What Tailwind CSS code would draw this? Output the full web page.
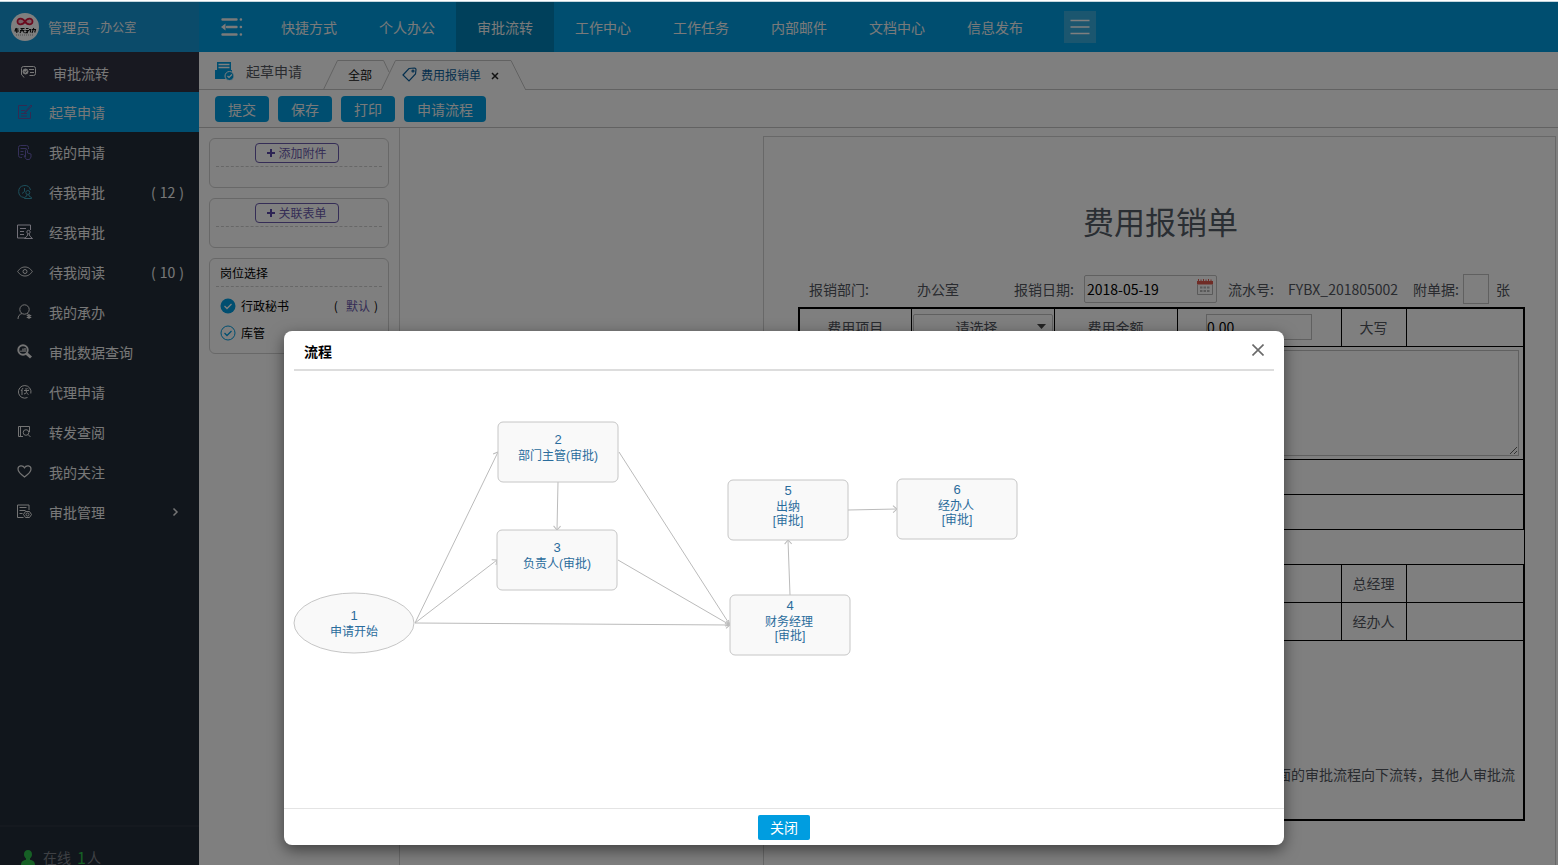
<!DOCTYPE html>
<html lang="zh-CN">
<head>
<meta charset="utf-8">
<meta name="viewport" content="width=device-width, initial-scale=1">
<title>费用报销单 - 起草申请</title>
<script src="https://cdn.jsdelivr.net/npm/@tailwindcss/browser@4"></script>
</head>
<body class="flex h-screen flex-col overflow-hidden bg-white font-['Noto_Sans_CJK_SC','Noto_Sans',sans-serif] text-sm text-[#52565e]">
<div class="h-0.5 shrink-0 border-b border-[#c4d6de] bg-white"></div>
<div class="relative flex min-h-0 flex-1 flex-col overflow-hidden">

  <!-- top bar -->
  <header class="flex h-[50px] shrink-0 items-stretch bg-[#009de0] text-[#f4f4f4]">
    <div class="flex w-[199px] shrink-0 items-center bg-[#1696d4] pl-[11px]">
      <svg class="size-7 shrink-0" viewBox="0 0 28 28">
        <circle cx="14" cy="14" r="14" fill="#fff"/>
        <path d="M14 8.500c-2-3.500-7.500-4-7.500 0s5.500 3.500 7.500 0c2-3.500 7.500-4 7.500 0s-5.500 3.500-7.500 0z" fill="#f3c4cf" stroke="#d4143c" stroke-width="1.800"/>
        <g fill="none" stroke="#111" stroke-width="1.100">
          <path d="M4 16h3.500M5.500 15l-1.500 2.500M3.500 18h4.500M5.800 16v4"/>
          <path d="M9.500 15.500h4M9 17.500h4.500M11.500 15.500l-2.500 4.500M11.500 17.500l2 2.500"/>
          <path d="M15 15.500h2.500M14.500 17.500h3l-2.500 2.300h2M18 16.500h1.800l-.5 3"/>
          <path d="M21 16.500h3.500l-.8 3M22.800 15l-1.800 5"/>
        </g>
        <path d="M5 22h18" stroke="#999" stroke-dasharray="1 1"/>
      </svg>
      <span class="ml-[9px]">管理员</span><span class="ml-1.5 text-xs">-办公室</span>
    </div>
    <button type="button" aria-label="收起菜单" class="flex w-[61px] shrink-0 items-center pl-[22px]">
      <svg class="h-[18px] w-[22px]" viewBox="0 0 22 18" fill="none" stroke="#f4f4f4" stroke-width="2.400" stroke-linecap="round">
        <path d="M1.500 1.500h14M6 9h9.500M1.500 16.500h14M19.800 1.500h.2M19.800 9h.2M19.800 16.500h.2"/>
        <path d="M0 9l4.500-3.500v7z" fill="#f4f4f4" stroke="none"/>
      </svg>
    </button>
    <nav class="flex">
      <a href="#" class="flex w-[98px] items-center justify-center">快捷方式</a>
      <a href="#" class="flex w-[98px] items-center justify-center">个人办公</a>
      <a href="#" class="flex w-[98px] items-center justify-center bg-[#0080b6]">审批流转</a>
      <a href="#" class="flex w-[98px] items-center justify-center">工作中心</a>
      <a href="#" class="flex w-[98px] items-center justify-center">工作任务</a>
      <a href="#" class="flex w-[98px] items-center justify-center">内部邮件</a>
      <a href="#" class="flex w-[98px] items-center justify-center">文档中心</a>
      <a href="#" class="flex w-[98px] items-center justify-center">信息发布</a>
    </nav>
    <button type="button" aria-label="更多" class="ml-5 flex size-8 items-center justify-center self-center bg-[#36adde]">
      <svg class="h-4 w-5" viewBox="0 0 20 16" stroke="#fff" stroke-width="1.500"><path d="M.5 1.500h19M.5 8h19M.5 14.500h19"/></svg>
    </button>
  </header>

  <div class="flex min-h-0 flex-1">
    <!-- side menu -->
    <aside class="flex w-[199px] shrink-0 flex-col bg-[#222c38] text-[#f0f0f0]">
      <div class="flex h-10 shrink-0 items-center bg-[#303242] pt-0.5 pl-5">
        <svg class="mb-0.5 h-4 w-[17px]" viewBox="0 0 17 16" fill="none" stroke="#f0f0f0">
          <path d="M4 13.500l-1.500-2a1.500 1.500 0 0 1-1-1.500V4.500A2 2 0 0 1 3.500 2.500h10a2 2 0 0 1 2 2v5a2 2 0 0 1-2 2h-4"/>
          <circle cx="5.500" cy="7.500" r="2.500" fill="#f0f0f0"/><path d="M4.300 7.500l1 1 1.700-2" stroke="#303242"/><path d="M9 5.500h5M10 8.500h4"/>
        </svg>
        <span class="ml-4">审批流转</span>
      </div>
      <nav class="flex flex-col">
        <a href="#" class="flex h-10 items-center bg-[#009de0] pl-[17px]">
          <svg class="mr-4 size-4" viewBox="0 0 16 16" fill="none" stroke="#6656a4"><path d="M10 1.500H1.500v13h12V8M4 6.500h4M4 9.500h6M4 12h6M8 8l6-7 1 1-6 6-1.500.5z"/></svg>
          <span>起草申请</span></a>
        <a href="#" class="flex h-10 items-center pl-[17px]">
          <svg class="mr-4 size-4" viewBox="0 0 16 16" fill="none" stroke="#6a60b4"><path d="M5 13.500H3.500a2 2 0 0 1-2-2v-8a2 2 0 0 1 2-2h6a2 2 0 0 1 2 2V5M3.500 4.500h6M3.500 7.500h3M3.500 10.500h3"/><path d="M8.500 13V6.500a1 1 0 0 1 2 0V9l3.500 1v3l-1.500 2.500H9.500L7 12l1.500-.5"/></svg>
          <span>我的申请</span></a>
        <a href="#" class="flex h-10 items-center pr-[15px] pl-[17px]">
          <svg class="mr-4 size-4" viewBox="0 0 16 16" fill="none" stroke="#3aa0b8"><path d="M7 13.500A6 6 0 1 1 13.500 6M7.500 4v3.500l-2.500 2"/><circle cx="10.800" cy="8.500" r="2"/><path d="M7.500 14.500v-1l2.300-1.500v-1.500M14.500 14.500v-1L12 12v-1.500M7.500 14.500h7"/></svg>
          <span class="flex-1">待我审批</span><span class="flex gap-1"><span>(</span><span>12</span><span>)</span></span></a>
        <a href="#" class="flex h-10 items-center pl-[17px]">
          <svg class="mr-4 size-4" viewBox="0 0 16 16" fill="none" stroke="#e4e0f0"><path d="M8 14H.5V1h13v5M3 4.500h6M3 7.500h4M3 10.500h4"/><circle cx="11.500" cy="8" r="1.700"/><path d="M10.800 9.800l-.6 2.200-2.700 2.500h8l-2.700-2.500-.6-2.200"/></svg>
          <span>经我审批</span></a>
        <a href="#" class="flex h-10 items-center pr-[15px] pl-[17px]">
          <svg class="mr-4 size-4" viewBox="0 0 16 16" fill="none" stroke="#e8e8e8"><path d="M.7 7.500C3 4 5.500 3 8 3s5 1 7.300 4.500C13 11 10.500 12 8 12S3 11 .7 7.500z"/><circle cx="8" cy="7.500" r="2"/></svg>
          <span class="flex-1">待我阅读</span><span class="flex gap-1"><span>(</span><span>10</span><span>)</span></span></a>
        <a href="#" class="flex h-10 items-center pl-[17px]">
          <svg class="mr-4 size-4" viewBox="0 0 16 16" fill="none" stroke="#e8e8e8"><circle cx="7.500" cy="5.500" r="4.700"/><path d="M5 9.500c-2.500.8-4 2.500-4 5.500M10 9.500l1.500.8"/><path d="M12 10v5M9.800 11.200l4.400 2.600M14.200 11.200l-4.400 2.600" stroke-width="1.200"/></svg>
          <span>我的承办</span></a>
        <a href="#" class="flex h-10 items-center pl-[17px]">
          <svg class="mr-4 size-4" viewBox="0 0 16 16" fill="none" stroke="#e8e8e8"><circle cx="6" cy="6" r="4.700" stroke-width="2"/><path d="M9.500 9.500l4.500 4" stroke-width="3"/><path d="M4 8V6.500M6 8V4.500M8 8V4" stroke-width="1.300"/></svg>
          <span>审批数据查询</span></a>
        <a href="#" class="flex h-10 items-center pl-[17px]">
          <svg class="mr-4 size-4" viewBox="0 0 16 16" fill="none" stroke="#e8e8e8"><path d="M10.500 13.500A6.300 6.300 0 1 1 13.800 9.500"/><path d="M6 4L4 7M5 6v5M7 6.500h5M9 4c0 3 .5 6 2.500 6.500M10.500 4.300l1 1M7 10l2-1"/></svg>
          <span>代理申请</span></a>
        <a href="#" class="flex h-10 items-center pl-[17px]">
          <svg class="mr-4 size-4" viewBox="0 0 16 16" fill="none" stroke="#e8e8e8"><path d="M6 12.500H1.500V2.500h11V8M3.500 2.500v10"/><circle cx="9" cy="8.500" r="2.800"/><path d="M11 10.500l2.500 2.500"/></svg>
          <span>转发查阅</span></a>
        <a href="#" class="flex h-10 items-center pl-[17px]">
          <svg class="mr-4 size-4" viewBox="0 0 16 16" fill="none" stroke="#e8e8e8" stroke-width="1.200"><path d="M7.500 13C4 10.500 1 8 1 5c0-3.700 4.800-4.300 6.500-1.200C9.200.7 14 1.300 14 5c0 3-3 5.500-6.500 8z"/></svg>
          <span>我的关注</span></a>
        <a href="#" class="flex h-10 items-center pr-5 pl-[17px]">
          <svg class="mr-4 size-4" viewBox="0 0 16 16" fill="none" stroke="#e8e8e8"><path d="M6.500 13.500h-6V1h11.500v5M2.500 3.500h7M2.500 6.500h6M2.500 9.500h3"/><path d="M8.500 7.500h4l2 3-2 3h-4l-2-3z"/><circle cx="10.500" cy="10.500" r="1.500"/></svg>
          <span class="flex-1">审批管理</span>
          <svg class="h-2 w-2" viewBox="0 0 8 8" fill="none" stroke="#e8e8e8" stroke-width="1.500"><path d="M2.500.5L6 4 2.500 7.500"/></svg></a>
      </nav>
      <div class="mt-auto flex h-10 shrink-0 items-end border-t-2 border-[#2b323f] pl-[21px] leading-4 text-[#7c8088]">
        <svg class="mr-2 h-[15px] w-[14px]" viewBox="0 0 14 15" fill="#2cc04a"><path d="M7 0c2.500 0 4 1.700 4 4.200C11 6.300 10 7.500 9 8.500v1.200c2.500.8 5 1.300 5 5.300H0c0-4 2.500-4.500 5-5.300V8.500c-1-1-2-2.200-2-4.300C3 1.700 4.500 0 7 0z"/></svg>
        <span>在线</span><span class="mr-px ml-1.5 text-base leading-4 text-[#2cc04a]">1</span><span>人</span>
      </div>
    </aside>

    <main class="flex min-w-0 flex-1 flex-col bg-white">
      <!-- tabs -->
      <div class="relative flex h-[38px] shrink-0 border-b border-[#c4c4c4]">
        <svg class="absolute top-2 left-[124px] h-[30px] w-[204px]" viewBox="0 0 204 30" fill="none" stroke="#c4c4c4">
          <path d="M59 29.500h143" stroke="#fff" stroke-width="2"/>
          <path d="M.5 29.500L14.500.5h46L66 12M58.500 29.500L72.500.5H188l14.500 29"/>
        </svg>
        <div class="flex w-[149px] items-center pl-4">
          <svg class="h-5 w-[19px]" viewBox="0 0 19 20"><path d="M2 1h14v9H2z" fill="#009de0"/><path d="M3.500 3.500h11M3.500 6.500h11" stroke="#fff" stroke-width="1.300"/><path d="M0 9h17v9H0z" fill="#009de0"/><circle cx="14.500" cy="15" r="4.500" fill="#009de0" stroke="#fff"/><path d="M12.500 15l1.500 1.500 3-3" fill="none" stroke="#fff" stroke-width="1.200"/></svg>
          <h1 class="ml-3">起草申请</h1>
        </div>
        <a href="#" class="relative w-[54px] pt-[13px] text-xs leading-5 text-[#111]">全部</a>
        <a href="#" class="relative flex gap-1 pt-[13px] text-xs leading-5 text-[#0c5f9c]">
          <svg class="mt-0.5 size-[15px]" viewBox="0 0 15 15" fill="none" stroke="#0c5f9c" stroke-width="1.200"><path d="M1 8L7 1.500l5.500-.5c1 0 1.500.5 1.500 1.500L13.500 7 7 14z"/><circle cx="11" cy="4" r="1"/></svg>
          <span>费用报销单</span></a>
        <button type="button" aria-label="关闭标签" class="relative ml-2.5 pt-2.5">
          <svg class="size-2" viewBox="0 0 8 8" stroke="#222" stroke-width="1.500"><path d="M1 1l6 6M7 1L1 7"/></svg>
        </button>
      </div>
      <!-- actions -->
      <div class="flex h-[38px] shrink-0 items-center gap-[9px] border-b border-[#c4c4c4] pl-4">
        <button type="button" class="h-[26px] w-[54px] rounded bg-[#009de0] text-[#f4f4f4]">提交</button>
        <button type="button" class="h-[26px] w-[54px] rounded bg-[#009de0] text-[#f4f4f4]">保存</button>
        <button type="button" class="h-[26px] w-[54px] rounded bg-[#009de0] text-[#f4f4f4]">打印</button>
        <button type="button" class="h-[26px] w-[82px] rounded bg-[#009de0] text-[#f4f4f4]">申请流程</button>
      </div>

      <div class="flex min-h-0 flex-1">
        <div class="flex w-[201px] shrink-0 flex-col gap-2.5 border-r border-[#d4d4d4] p-2.5 text-xs">
          <section class="h-[50px] rounded-md border border-[#d0d0d0] px-1.5 pt-1">
            <div class="flex h-6 items-start justify-center border-b border-dashed border-[#cfcfcf]">
              <button type="button" class="mr-1 flex h-5 w-[84px] items-center justify-center gap-[3px] rounded border border-[#6a5aac] leading-4 text-[#6a5aac]">
                <svg class="size-2" viewBox="0 0 8 8" stroke="#5a48a8" stroke-width="2"><path d="M4 0v8M0 4h8"/></svg>添加附件</button>
            </div>
          </section>
          <section class="h-[50px] rounded-md border border-[#d0d0d0] px-1.5 pt-1">
            <div class="flex h-6 items-start justify-center border-b border-dashed border-[#cfcfcf]">
              <button type="button" class="mr-1 flex h-5 w-[84px] items-center justify-center gap-[3px] rounded border border-[#6a5aac] leading-4 text-[#6a5aac]">
                <svg class="size-2" viewBox="0 0 8 8" stroke="#5a48a8" stroke-width="2"><path d="M4 0v8M0 4h8"/></svg>关联表单</button>
            </div>
          </section>
          <section class="h-24 rounded-md border border-[#d0d0d0] px-1.5 text-black">
            <h2 class="h-7 border-b border-dashed border-[#cfcfcf] pl-1 leading-7">岗位选择</h2>
            <label class="flex h-8 items-center pt-1.5 pl-1">
              <input type="radio" name="post" checked class="peer sr-only">
              <svg class="mr-[5px] size-4" viewBox="0 0 16 16"><circle cx="8" cy="8" r="7.500" fill="#009de0"/><path d="M4.500 8l2.500 2.500L11.500 6" fill="none" stroke="#fff" stroke-width="1.300"/></svg>
              <span class="flex-1">行政秘书</span>
              <span class="flex gap-2 pr-1"><span>(</span><span class="text-[#6a5aac]">默认</span></span><span>)</span><span class="w-1"></span>
            </label>
            <label class="flex h-7 items-center pl-1">
              <input type="radio" name="post" class="peer sr-only">
              <svg class="mr-[5px] size-4" viewBox="0 0 16 16" fill="none" stroke="#009de0"><circle cx="8" cy="8" r="7"/><path d="M4.500 8l2.500 2.500L11.500 6" stroke-width="1.300"/></svg>
              <span>库管</span>
            </label>
          </section>
        </div>

        <!-- expense form -->
        <div class="flex min-w-0 flex-1 justify-end pt-2 pr-0.5">
          <form class="w-[793px] shrink-0 border-x border-t border-[#d0d0d0] pl-[34px]">
            <h2 class="w-[725px] pt-[61px] text-center text-[31px] leading-[46px] text-[#545c66]">费用报销单</h2>
            <div class="mt-[30px] flex h-[30px] items-center pl-[11px]">
              <span class="w-[108px]">报销部门:</span>
              <span class="w-[97px]">办公室</span>
              <label for="date" class="w-[70px]">报销日期:</label>
              <span class="relative mr-[11px] w-[133px]">
                <input id="date" type="text" value="2018-05-19" class="h-7 w-full rounded-xs border border-[#c0c0c0] pl-0.5 text-black">
                <svg class="absolute top-1 right-1 size-4" viewBox="0 0 16 16"><path d="M0 2h16v3.500H0z" fill="#e0584c"/><path d="M1.500 0v2M4 .5v2M6.500 0v2M9 .5v2M11.500 0v2M14 .5v2" stroke="#e0584c"/><path d="M.5 5.500v10h15v-10" fill="none" stroke="#b4b4b4"/><path d="M3 8.500h10M3 12h10" stroke="#b4b4b4" stroke-width="2" stroke-dasharray="2.500 1"/></svg>
              </span>
              <span class="w-[60px]">流水号:</span>
              <span class="w-[125px]">FYBX_201805002</span>
              <label for="pieces" class="w-[50px]">附单据:</label>
              <input id="pieces" type="text" class="mr-[7px] h-[30px] w-[26px] border border-[#c0c0c0]">
              <span>张</span>
            </div>
            <table class="mt-[3px] w-[725px] table-fixed border-collapse border-y-2 border-l-2 border-black text-center">
              <colgroup><col class="w-[112px]"><col class="w-[143px]"><col class="w-[123px]"><col class="w-[164px]"><col class="w-[65px]"><col class="w-[118px]"></colgroup>
              <tbody>
              <tr class="h-[38px]">
                <td class="border border-black">费用项目</td>
                <td class="border border-black px-px">
                  <span class="relative block">
                    <select aria-label="费用项目" class="block h-[26px] w-full appearance-none rounded-xs border border-[#c0c0c0] pr-3 text-center"><option>请选择</option></select>
                    <svg class="absolute top-2.5 right-[7px] h-[5px] w-[9px]" viewBox="0 0 9 5" fill="#444"><path d="M0 0h9L4.500 5z"/></svg>
                  </span>
                </td>
                <td class="border border-black">费用金额</td>
                <td class="border border-black"><input type="text" aria-label="费用金额" value="0.00" class="mx-auto block h-[26px] w-[106px] border border-[#c0c0c0] text-black"></td>
                <td class="border border-black">大写</td>
                <td class="border border-r-2 border-black"></td>
              </tr>
              <tr class="h-[113px]">
                <td class="border border-black"></td>
                <td colspan="5" class="border border-r-2 border-black px-1"><textarea aria-label="报销事由" class="block h-[106px] w-full resize border border-[#c0c0c0]"></textarea></td>
              </tr>
              <tr class="h-[35px]"><td colspan="6" class="border border-r-2 border-black"></td></tr>
              <tr class="h-[35px]"><td colspan="6" class="border border-r-2 border-black"></td></tr>
              <tr class="h-[35px]"><td colspan="6" class="border border-black"></td></tr>
              <tr class="h-[38px]">
                <td class="border border-black"></td><td class="border border-black"></td><td class="border border-black"></td><td class="border border-black"></td>
                <td class="border border-black">总经理</td><td class="border border-r-2 border-black"></td>
              </tr>
              <tr class="h-[38px]">
                <td class="border border-black"></td><td class="border border-black"></td><td class="border border-black"></td><td class="border border-black"></td>
                <td class="border border-black">经办人</td><td class="border border-r-2 border-black"></td>
              </tr>
              <tr class="h-[180px]"><td colspan="6" class="border border-r-2 border-black pt-[89px] pr-2 text-right">面的审批流程向下流转，其他人审批流</td></tr>
              </tbody>
            </table>
          </form>
        </div>
      </div>
    </main>
  </div>

  <!-- flow dialog -->
  <div class="absolute inset-0 bg-black/50">
    <div role="dialog" aria-modal="true" aria-labelledby="dlg" class="absolute top-[329px] left-[284px] flex h-[514px] w-[1000px] flex-col rounded-lg bg-white shadow-[0_5px_15px_rgba(0,0,0,0.5)]">
      <div class="mx-2.5 flex h-10 shrink-0 items-center justify-between border-b-2 border-[#ddd] pr-2.5 pl-2.5">
        <h2 id="dlg" class="pt-0.5 font-bold text-black">流程</h2>
        <button type="button" aria-label="关闭窗口"><svg class="size-3" viewBox="0 0 12 12" stroke="#6a6a6a" stroke-width="1.600"><path d="M.5.5l11 11M11.500.5l-11 11"/></svg></button>
      </div>
      <div class="min-h-0 flex-1 font-['Liberation_Sans','Noto_Sans_CJK_SC',sans-serif]">
        <svg class="block h-[430px] w-full" viewBox="0 0 1000 430" preserveAspectRatio="xMinYMin meet">
          <defs><marker id="arrow" viewBox="0 0 8 8" refX="7" refY="4" markerWidth="8" markerHeight="8" orient="auto"><path d="M3 .5L7 4 3 7.500" fill="none" stroke="#bbb"/></marker></defs>
          <g fill="none" stroke="#bbb">
            <path d="M131 252L214 81" marker-end="url(#arrow)"/>
            <path d="M131 252L213 189" marker-end="url(#arrow)"/>
            <path d="M131 252L446 254" marker-end="url(#arrow)"/>
            <path d="M274 111L273 159" marker-end="url(#arrow)"/>
            <path d="M335 81L446 254" marker-end="url(#arrow)"/>
            <path d="M334 189L446 254" marker-end="url(#arrow)"/>
            <path d="M506 224L504 169" marker-end="url(#arrow)"/>
            <path d="M564 139L613 138" marker-end="url(#arrow)"/>
          </g>
          <g fill="#f9f9f9" stroke="#c6c6c6">
            <ellipse cx="70" cy="252" rx="60" ry="30"/>
            <rect x="214" y="51" width="120" height="60" rx="5"/>
            <rect x="213" y="159" width="120" height="60" rx="5"/>
            <rect x="446" y="224" width="120" height="60" rx="5"/>
            <rect x="444" y="109" width="120" height="60" rx="5"/>
            <rect x="613" y="108" width="120" height="60" rx="5"/>
          </g>
          <g class="text-xs" fill="#2a6c9c" text-anchor="middle">
            <text x="70" y="249" class="text-[13px]">1</text><text x="70" y="265">申请开始</text>
            <text x="274" y="73" class="text-[13px]">2</text><text x="274" y="89">部门主管(审批)</text>
            <text x="273" y="181" class="text-[13px]">3</text><text x="273" y="197">负责人(审批)</text>
            <text x="506" y="239" class="text-[13px]">4</text><text x="505" y="255">财务经理</text><text x="506" y="269">[审批]</text>
            <text x="504" y="124" class="text-[13px]">5</text><text x="504" y="140">出纳</text><text x="504" y="154">[审批]</text>
            <text x="673" y="123" class="text-[13px]">6</text><text x="672" y="139">经办人</text><text x="673" y="153">[审批]</text>
          </g>
        </svg>
      </div>
      <div class="flex h-[37px] shrink-0 items-center justify-center border-t border-[#e4e4e4]">
        <button type="button" class="h-[25px] w-[52px] rounded-xs bg-[#009de0] text-white">关闭</button>
      </div>
    </div>
  </div>
</div>
</body>
</html>
